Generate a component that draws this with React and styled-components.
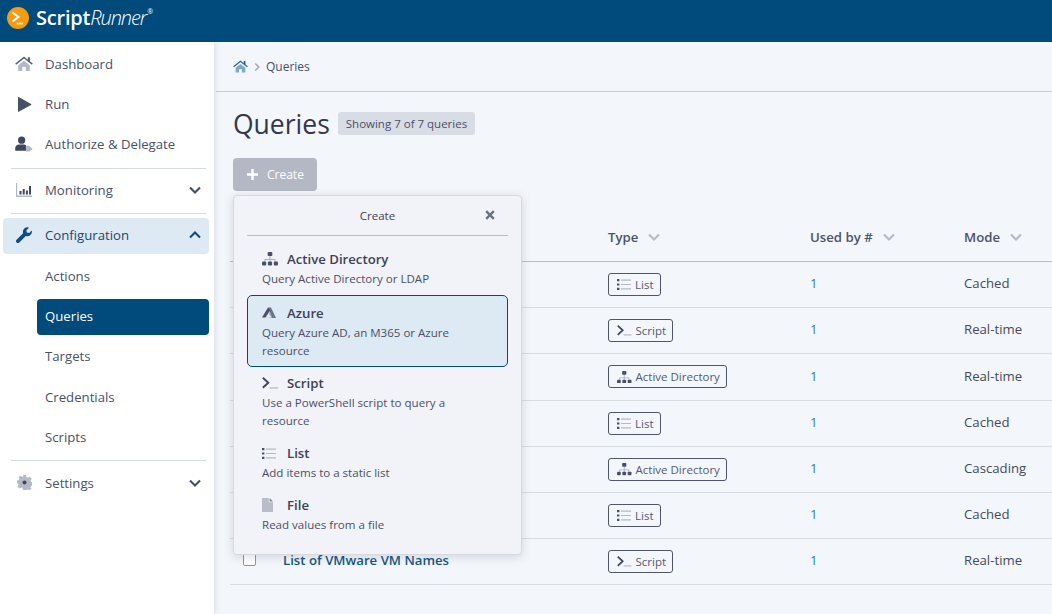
import React from 'react';
import styled, { createGlobalStyle } from 'styled-components';

const GlobalStyle = createGlobalStyle`
  html, body { margin: 0; padding: 0; height: 100%; overflow: hidden; }
  body { font-family: "Open Sans", "Liberation Sans", sans-serif; color: #3f4459; background: #f3f6fa; }
  * { box-sizing: border-box; }
`;

const Page = styled.div`
  width: 1052px;
  height: 614px;
  display: flex;
  flex-direction: column;
  overflow: hidden;
`;

// Barra superior con el logo
const TopBar = styled.header`
  height: 42px;
  flex: none;
  background: #004a7c;
  display: flex;
  align-items: center;
  padding: 0 0 6px 7px;
  gap: 7px;
`;

const Brand = styled.div`
  color: #fff;
  font-size: 20px;
  line-height: 24px;
  font-weight: 600;
  letter-spacing: -0.2px;
  display: flex;
`;

const BrandLight = styled.span`
  font-weight: 300;
  font-style: italic;
  letter-spacing: -1.1px;
`;

const BrandMark = styled.sup`
  font-size: 7px;
  line-height: 12px;
  font-weight: 400;
  margin: 0 0 0 1px;
`;

const Body = styled.div`
  flex: 1;
  display: flex;
  min-height: 0;
`;

// Menú lateral
const Sidebar = styled.nav`
  width: 214px;
  flex: none;
  background: #fff;
  padding: 2px 5px 0 3px;
  box-shadow: 1px 0 6px rgba(60, 70, 100, 0.14);
  z-index: 2;
`;

const NavItem = styled.div`
  height: ${({ $tall }) => ($tall ? '40px' : '36px')};
  display: flex;
  align-items: center;
  padding: ${({ $open }) => ($open ? '0 7px 2px 12px' : '0 7px 0 12px')};
  gap: 12px;
  font-size: 13.2px;
  border-radius: 4px;
  background: ${({ $open }) => ($open ? '#dde9f3' : 'transparent')};
  color: ${({ $open }) => ($open ? '#21486f' : '#4a5068')};
`;

const NavIcon = styled.span`
  width: 18px;
  height: 18px;
  flex: none;
  display: flex;
  align-items: center;
  justify-content: center;
`;

const NavLabel = styled.span`
  flex: 1;
`;

const NavRule = styled.hr`
  border: 0;
  height: 1px;
  background: #d5d9e1;
  margin: ${({ $m }) => $m || '2px 3px 2px 8px'};
`;

const SubList = styled.div`
  display: flex;
  flex-direction: column;
  gap: 4.2px;
  margin-top: 4px;
`;

const SubItem = styled.div`
  height: 36px;
  margin-left: 34px;
  padding: ${({ $active }) => ($active ? '0 0 2px 8px' : '0 0 0 8px')};
  display: flex;
  align-items: center;
  font-size: 13.2px;
  border-radius: 4px;
  background: ${({ $active }) => ($active ? '#004a7c' : 'transparent')};
  color: ${({ $active }) => ($active ? '#fff' : '#4a5068')};
  margin-top: ${({ $active }) => ($active ? '1px' : '0')};
  margin-bottom: ${({ $active }) => ($active ? '-1px' : '0')};
`;

// Contenido principal
const Main = styled.main`
  flex: 1;
  position: relative;
  min-width: 0;
`;

const Breadcrumb = styled.div`
  height: 50px;
  margin-left: 2px;
  border-bottom: 1px solid #c9ccd3;
  display: flex;
  align-items: center;
  padding-left: 17px;
  gap: 4px;
  font-size: 12px;
  color: #4a5068;
`;

const TitleRow = styled.div`
  display: flex;
  align-items: center;
  padding: 16px 0 0 19px;
  gap: 8px;
  height: 48px;
`;

const Title = styled.h1`
  margin: 0;
  font-size: 26.5px;
  line-height: 32px;
  font-weight: 500;
  color: #33384a;
`;

const Badge = styled.span`
  height: 23px;
  display: flex;
  align-items: center;
  padding: 0 8px;
  margin-top: -2px;
  border-radius: 3px;
  background: #d8dce5;
  font-size: 11.5px;
  color: #4a5068;
`;

const CreateButton = styled.button`
  display: flex;
  align-items: center;
  gap: 9px;
  height: 33px;
  width: 84px;
  margin: 18px 0 0 19px;
  padding: 0 0 0 14px;
  border: 0;
  border-radius: 4px;
  background: #b3b8c4;
  color: #fff;
  font: 400 12px "Open Sans", sans-serif;
`;

const Table = styled.div`
  margin: 26px 0 0 16px;
`;

const Row = styled.div`
  display: grid;
  grid-template-columns: 53px 325px 202px 154px 1fr;
  align-items: center;
  height: ${({ $head }) => ($head ? '45px' : '46.2px')};
  border-bottom: 1px solid ${({ $head }) => ($head ? '#b9bdc7' : '#d9dce2')};
  font-size: 13.2px;
`;

const HeadCell = styled.div`
  display: flex;
  align-items: center;
  gap: 9px;
  margin-top: -5px;
  font-weight: 600;
  color: #4d5369;
`;

const CheckCell = styled.div`
  padding-left: 13px;
  display: flex;
`;

const Checkbox = styled.span`
  width: 13px;
  height: 13px;
  margin-top: -5px;
  border: 1px solid #8f94a2;
  border-radius: 2px;
  background: #fff;
`;

const NameLink = styled.div`
  margin-top: -3px;
  font-weight: 600;
  color: #16567f;
`;

const TypeTag = styled.span`
  display: inline-flex;
  align-items: center;
  gap: 4px;
  height: 23px;
  padding: 0 6px 0 8px;
  border: 1px solid #4f556b;
  border-radius: 3px;
  font-size: 11.5px;
  color: #555b70;
`;

const UsedBy = styled.span`
  margin-top: -2.6px;
  color: #2c7db4;
`;

const ModeText = styled.span`
  margin-top: -2.6px;
  color: #454a5c;
`;

// Menú desplegable de creación
const Popup = styled.div`
  position: absolute;
  left: 19px;
  top: 153px;
  width: 289px;
  height: 360px;
  padding: 0 13px;
  background: #f1f3f8;
  border: 1px solid #d6d9e0;
  border-radius: 4px;
  box-shadow: 0 2px 10px rgba(60, 70, 100, 0.18);
  z-index: 3;
`;

const PopupHead = styled.div`
  height: 40px;
  border-bottom: 1px solid #b9bcc4;
  display: flex;
  align-items: center;
  justify-content: center;
  position: relative;
  font-size: 11.5px;
  color: #3f4459;
`;

const CloseIcon = styled.span`
  position: absolute;
  right: 13px;
  top: 14px;
  display: flex;
`;

const Option = styled.div`
  padding: ${({ $active }) => ($active ? '7px 14px 6px' : '7px 14px 4px')};
  margin: ${({ $active }) => ($active ? '2px 0 -2px' : '0')};
  border: 1px solid ${({ $active }) => ($active ? '#004a7c' : 'transparent')};
  border-radius: 5px;
  background: ${({ $active }) => ($active ? '#dde9f3' : 'transparent')};
`;

const OptionHead = styled.div`
  display: flex;
  align-items: center;
  height: 20px;
  font-size: 13.2px;
  font-weight: 600;
  color: #3d4255;
`;

const OptionIcon = styled.span`
  width: 25px;
  flex: none;
  display: flex;
`;

const OptionText = styled.div`
  margin-top: 1px;
  font-size: 11.55px;
  line-height: 18px;
  color: #4a5068;
`;

const OptionList = styled.div`
  padding-top: 5px;
`;

const Chevron = ({ dir = 'down', color = '#3f4f68', size = 14 }) => {
  const paths = {
    down: 'M2 4.5 7 9.5l5-5',
    up: 'M2 9.500 7 4.500l5 5',
    right: 'M4.500 2 9.500 7l-5 5',
  };
  return (
    <svg width={size} height={size} viewBox="0 0 14 14" fill="none">
      <path d={paths[dir]} stroke={color} strokeWidth="2.1" />
    </svg>
  );
};

const HomeIcon = ({ top, body, size = 18 }) => (
  <svg width={size} height={size * 0.85} viewBox="0 0 20 17">
    <path d="M10 5.2 3.5 10.4V16a.7.7 0 0 0 .7.7h3.9v-4.4h3.8v4.4h3.9a.7.7 0 0 0 .7-.7v-5.6z" fill={body} />
    <path d="M10 .6.3 8.4l1 1.2L10 2.7l8.7 6.9 1-1.2-3.1-2.5V1.4h-2.3v2.8z" fill={top} />
  </svg>
);

const PlayIcon = () => (
  <svg width="15" height="15" viewBox="0 0 15 15">
    <path d="M1 .4c0-.4.3-.5.7-.3l12.4 6.8c.4.3.4.7 0 1L1.7 14.8c-.4.2-.7.1-.7-.3z" fill="#4a5068" />
  </svg>
);

const UserTagIcon = () => (
  <svg width="19" height="16" viewBox="0 0 19 16">
    <circle cx="7" cy="4" r="3.800" fill="#3f4660" />
    <path d="M.2 15v-2.200C.2 10.200 2.300 8.600 4.500 8.600h5c.8 0 1.500.2 2.100.6v5.800H.7c-.3 0-.5-.2-.5 0z" fill="#3f4660" />
    <path d="M11.500 9.800h3.200l4 3.400-3.200 2.600h-4z" fill="#b4b9c6" />
  </svg>
);

const ChartIcon = () => (
  <svg width="16" height="14" viewBox="0 0 16 14">
    <path d="M0 0h1.200v12.600H16V14H0z" fill="#b4b9c6" />
    <path d="M3.500 8h2v3.500h-2zM6.700 6h2v5.500h-2zM9.900 7.500h2v4h-2zM13 3h2v8.500h-2z" fill="#3f4660" />
  </svg>
);

const WrenchIcon = () => (
  <svg width="16" height="16" viewBox="0 0 16 16">
    <path d="M15.700 3.400 13.200 6l-2.400-.4-.4-2.400L13 .7a4.500 4.500 0 0 0-5.900 5.500L.6 12.700a1.900 1.900 0 0 0 2.700 2.700l6.500-6.500a4.500 4.500 0 0 0 5.900-5.500z" fill="#0f4c7c" />
  </svg>
);

const GearIcon = () => (
  <svg width="15" height="15" viewBox="0 0 15 15">
    <path d="M6 0h3l.4 2 1.500.7L12.700 1.700l2 2.200-1.100 1.700.5 1.400 1.900.5v3l-1.900.5-.6 1.400 1 1.700-2.100 1.100-1.700-.7-1.300.6L9 15H6l-.4-1.800-1.400-.6-1.800.8-1.900-2 1-1.700-.6-1.500L0 8.500v-3l1.900-.5.6-1.400-1-1.700 2-1.200 1.700 1 1.400-.7z" fill="#b4b9c6" />
    <circle cx="7.500" cy="7.500" r="2" fill="#3f4660" />
  </svg>
);

const SitemapIcon = ({ size = 16, light = '#aab0be' }) => (
  <svg width={size} height={size * 0.88} viewBox="0 0 16 14">
    <path d="M7.500 4h1v3h5v2.500h-1V8H8.500v1.500h-1V8H3.500v1.500h-1V7h5z" fill={light} />
    <rect x="5.700" y="0" width="4.600" height="4" rx=".8" fill="#4a5068" />
    <rect x="0" y="9.500" width="4.200" height="4" rx="1" fill="#4a5068" />
    <rect x="5.900" y="9.500" width="4.200" height="4" rx="1" fill="#4a5068" />
    <rect x="11.800" y="9.500" width="4.200" height="4" rx="1" fill="#4a5068" />
  </svg>
);

const ListIcon = () => (
  <svg width="14" height="13" viewBox="0 0 14 13">
    <path d="M0 1h2.400v2.200H0zM0 5.400h2.400v2.200H0zM0 9.800h2.400V12H0z" fill="#4a5068" />
    <path d="M4 1.500h10v1.200H4zM4 5.900h10v1.200H4zM4 10.300h10v1.200H4z" fill="#b4b9c6" />
  </svg>
);

const ScriptIcon = ({ width = 16 }) => (
  <svg width={width} height={width * 0.75} viewBox="0 0 16 12">
    <path d="M.8.8 6.300 5.800.8 10.800" fill="none" stroke="#3f4660" strokeWidth="1.900" />
    <path d="M7.500 10.300H16v1.300H7.500z" fill="#b4b9c6" />
  </svg>
);

const AzureIcon = () => (
  <svg width="14" height="12" viewBox="0 0 14 12">
    <path d="M6 .4h3L14 11H9.500z" fill="#6e7487" />
    <path d="M6 .4 0 10.600h3.600L8.200 3z" fill="#4a5068" />
    <path d="M6.500 6.800 9.200 10 3.600 10.600H10L8 5z" fill="#aab0be" />
  </svg>
);

const FileIcon = () => (
  <svg width="11" height="14" viewBox="0 0 11 14">
    <path d="M0 0h6.800v4.200H11V14H0z" fill="#b9bdc9" />
    <path d="M7.600 0 11 3.400H7.600z" fill="#7e8597" />
  </svg>
);

const PlusIcon = () => (
  <svg width="11" height="11" viewBox="0 0 11 11">
    <path d="M4.300 0h2.400v4.300H11v2.400H6.700V11H4.300V6.700H0V4.300h4.300z" fill="#fff" />
  </svg>
);

const CloseGlyph = () => (
  <svg width="10" height="10" viewBox="0 0 10 10">
    <path d="M1.200 1.200l7.600 7.600M8.800 1.200 1.200 8.800" stroke="#66708a" strokeWidth="2.400" />
  </svg>
);

const LogoIcon = () => (
  <svg width="22" height="22" viewBox="0 0 22 22">
    <circle cx="11" cy="11" r="11" fill="#f39c12" />
    <path d="M5.500 5.500 11.500 10 5.500 14.500" fill="none" stroke="#fff" strokeWidth="2" />
    <path d="M9.500 15.800h6.500v1.500H9.500z" fill="#fff" />
  </svg>
);

const TagIcons = {
  list: <ListIcon />,
  script: <ScriptIcon width={14.5} />,
  ad: <SitemapIcon size={14.5} />,
};

const TagLabels = { list: 'List', script: 'Script', ad: 'Active Directory' };

const queries = [
  { type: 'list', mode: 'Cached' },
  { type: 'script', mode: 'Real-time' },
  { type: 'ad', mode: 'Real-time' },
  { type: 'list', mode: 'Cached' },
  { type: 'ad', mode: 'Cascading' },
  { type: 'list', mode: 'Cached' },
  { type: 'script', mode: 'Real-time', name: 'List of VMware VM Names' },
];

const options = [
  { icon: <SitemapIcon />, title: 'Active Directory', text: 'Query Active Directory or LDAP' },
  { icon: <AzureIcon />, title: 'Azure', text: 'Query Azure AD, an M365 or Azure resource', active: true },
  { icon: <ScriptIcon />, title: 'Script', text: 'Use a PowerShell script to query a resource' },
  { icon: <ListIcon />, title: 'List', text: 'Add items to a static list' },
  { icon: <FileIcon />, title: 'File', text: 'Read values from a file' },
];

const App = () => (
  <Page>
    <GlobalStyle />
    <TopBar>
      <LogoIcon />
      <Brand>
        Script<BrandLight>Runner</BrandLight><BrandMark>®</BrandMark>
      </Brand>
    </TopBar>
    <Body>
      <Sidebar>
        <NavItem $tall><NavIcon><HomeIcon top="#5a6074" body="#b4b9c6" /></NavIcon><NavLabel>Dashboard</NavLabel></NavItem>
        <NavItem $tall><NavIcon><PlayIcon /></NavIcon><NavLabel>Run</NavLabel></NavItem>
        <NavItem $tall><NavIcon><UserTagIcon /></NavIcon><NavLabel>Authorize &amp; Delegate</NavLabel></NavItem>
        <NavRule $m="4px 3px 1px 8px" />
        <NavItem $tall><NavIcon><ChartIcon /></NavIcon><NavLabel>Monitoring</NavLabel><Chevron /></NavItem>
        <NavRule $m="3px 3px 4px 8px" />
        <NavItem $open><NavIcon><WrenchIcon /></NavIcon><NavLabel>Configuration</NavLabel><Chevron dir="up" color="#0f4c7c" /></NavItem>
        <SubList>
          <SubItem>Actions</SubItem>
          <SubItem $active>Queries</SubItem>
          <SubItem>Targets</SubItem>
          <SubItem>Credentials</SubItem>
          <SubItem>Scripts</SubItem>
        </SubList>
        <NavRule $m="5px 3px 2px 8px" />
        <NavItem $tall><NavIcon><GearIcon /></NavIcon><NavLabel>Settings</NavLabel><Chevron /></NavItem>
      </Sidebar>
      <Main>
        <Breadcrumb>
          <HomeIcon top="#1f5f8e" body="#7fa8c9" size={15} />
          <Chevron dir="right" color="#a4a9b5" size={10} />
          <span>Queries</span>
        </Breadcrumb>
        <TitleRow>
          <Title>Queries</Title>
          <Badge>Showing 7 of 7 queries</Badge>
        </TitleRow>
        <CreateButton><PlusIcon />Create</CreateButton>
        <Table>
          <Row $head>
            <div />
            <div />
            <HeadCell>Type <Chevron color="#b4b9c6" /></HeadCell>
            <HeadCell>Used by # <Chevron color="#b4b9c6" /></HeadCell>
            <HeadCell>Mode <Chevron color="#b4b9c6" /></HeadCell>
          </Row>
          {queries.map((q, i) => (
            <Row key={i}>
              <CheckCell>{q.name && <Checkbox />}</CheckCell>
              <div>{q.name && <NameLink>{q.name}</NameLink>}</div>
              <div><TypeTag>{TagIcons[q.type]}{TagLabels[q.type]}</TypeTag></div>
              <UsedBy>1</UsedBy>
              <ModeText>{q.mode}</ModeText>
            </Row>
          ))}
        </Table>
        <Popup>
          <PopupHead>
            Create
            <CloseIcon><CloseGlyph /></CloseIcon>
          </PopupHead>
          <OptionList>
            {options.map(o => (
              <Option key={o.title} $active={o.active}>
                <OptionHead><OptionIcon>{o.icon}</OptionIcon>{o.title}</OptionHead>
                <OptionText>{o.text}</OptionText>
              </Option>
            ))}
          </OptionList>
        </Popup>
      </Main>
    </Body>
  </Page>
);

export default App;
